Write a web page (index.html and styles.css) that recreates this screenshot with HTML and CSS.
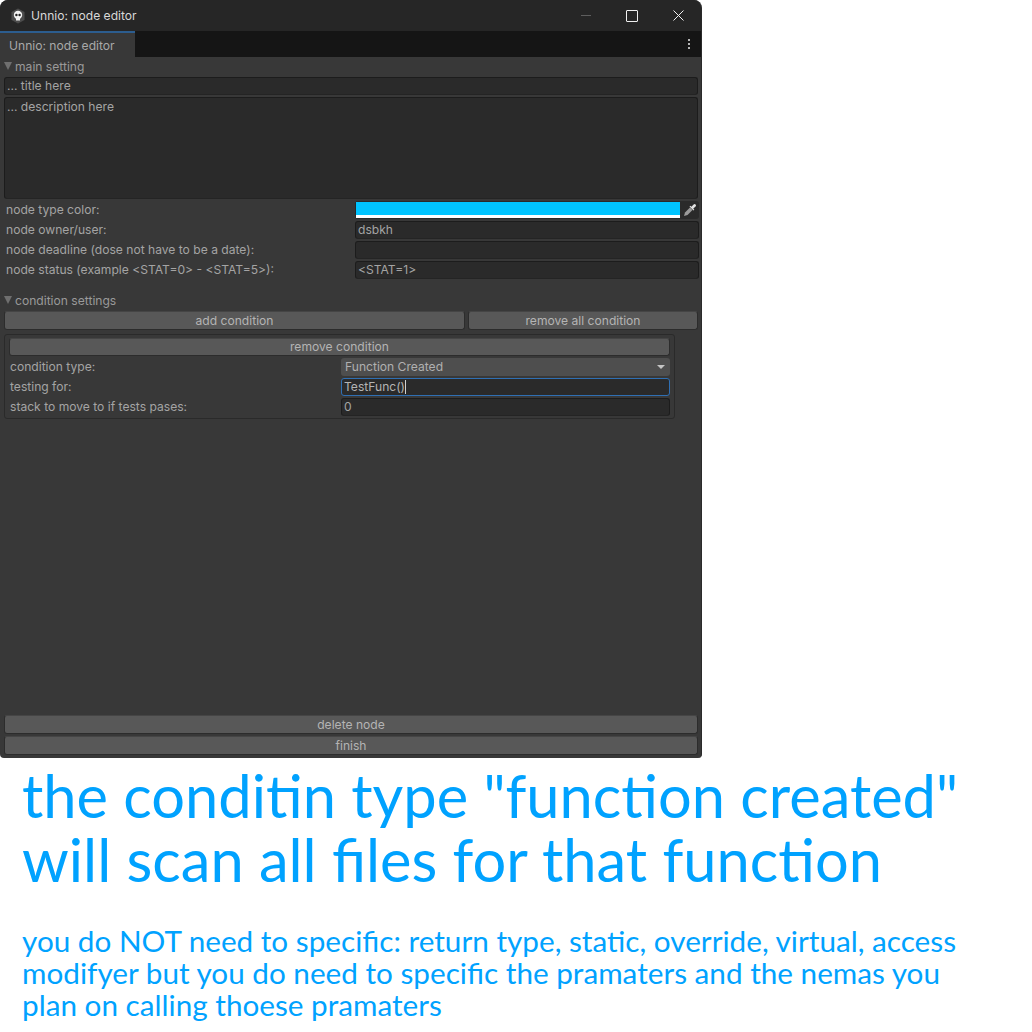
FILE: index.html
```html
<!DOCTYPE html>
<html>
	<head>
		<meta charset="utf-8">
		<title>Unnio: node editor</title>
		<link rel="stylesheet" href="styles.css">
	</head>
	<body>
		<div class="window">
			<div class="titlebar">
				<svg class="appicon" viewBox="0 0 16 16" width="16" height="16">
					<path d="M8 0.5 L14.5 4 V12 L8 15.5 L1.5 12 V4 Z" fill="#4c4c4c"/>
					<circle cx="8" cy="7" r="4.2" fill="#f2f2f2"/>
					<rect x="6" y="10" width="4" height="2.5" fill="#f2f2f2"/>
					<circle cx="6.4" cy="7" r="1.2" fill="#222"/>
					<circle cx="9.6" cy="7" r="1.2" fill="#222"/>
				</svg>
				<span class="titletext">Unnio: node editor</span>
				<div class="winbtns">
					<span class="winbtn"><i class="minimize"></i></span>
					<span class="winbtn"><i class="maximize"></i></span>
					<span class="winbtn">
						<svg viewBox="0 0 11 11" width="11" height="11"><path d="M0.5 0.5 L10.5 10.5 M10.5 0.5 L0.5 10.5" stroke="#f0f0f0" stroke-width="1" fill="none"/></svg>
					</span>
				</div>
			</div>
			<div class="tabbar">
				<div class="tab">Unnio: node editor</div>
				<div class="kebab"><i></i><i></i><i></i></div>
			</div>
			<div class="content">
				<div class="header"><i class="arrow"></i>main setting</div>
				<div class="input full">... title here</div>
				<div class="input full multiline">... description here</div>

				<div class="row first">
					<span class="label">node type color:</span>
					<div class="colorfield">
						<div class="swatch"></div>
						<svg class="picker" viewBox="0 0 14 14" width="14" height="14">
							<path d="M1 13 L2 9.5 L7 4.5 L9.5 7 L4.5 12 Z" fill="#9a9a9a"/>
							<path d="M6.5 3.5 L10.5 7.5 L11.3 6.7 L10.3 5.6 L12.6 3.4 Q13.5 2.4 12.6 1.4 Q11.6 0.5 10.6 1.4 L8.4 3.7 L7.3 2.7 Z" fill="#e2e2e2"/>
						</svg>
					</div>
				</div>
				<div class="row">
					<span class="label">node owner/user:</span>
					<div class="input">dsbkh</div>
				</div>
				<div class="row">
					<span class="label">node deadline (dose not have to be a date):</span>
					<div class="input"></div>
				</div>
				<div class="row">
					<span class="label">node status (example &lt;STAT=0&gt; - &lt;STAT=5&gt;):</span>
					<div class="input">&lt;STAT=1&gt;</div>
				</div>

				<div class="header second"><i class="arrow"></i>condition settings</div>
				<div class="btnrow">
					<div class="btn add">add condition</div>
					<div class="btn removeall">remove all condition</div>
				</div>

				<div class="condition">
					<div class="btn">remove condition</div>
					<div class="crow">
						<span class="clabel">condition type:</span>
						<div class="combo">Function Created<i class="comboarrow"></i></div>
					</div>
					<div class="crow">
						<span class="clabel">testing for:</span>
						<div class="input focused">TestFunc()<i class="caret"></i></div>
					</div>
					<div class="crow">
						<span class="clabel">stack to move to if tests pases:</span>
						<div class="input">0</div>
					</div>
				</div>

				<div class="bottom">
					<div class="btn">delete node</div>
					<div class="btn">finish</div>
				</div>
			</div>
		</div>
		<div class="notes">
			<p class="big">the conditin type "function created" will scan all files for that function</p>
			<p class="small">you do NOT need to specific: return type, static, override, virtual, access modifyer but you do need to specific the pramaters and the nemas you plan on calling thoese pramaters</p>
		</div>
	</body>
</html>
```

FILE: styles.css
```css
body {
	margin: 0;
	background-color: #fff;
	font-family: Inter, "Liberation Sans", sans-serif;
	font-size: 12.1px;
	color: #a9a9a9;
}

.window {
	width: 702px;
	height: 758px;
	box-sizing: border-box;
	background-color: #383838;
	border-radius: 8px 8px 4px 4px;
	border-right: 1px solid #2a2a2a;
	display: flex;
	flex-direction: column;
	overflow: hidden;
}

.titlebar {
	height: 31px;
	flex: none;
	background-color: #262626;
	display: flex;
	align-items: center;
	padding-left: 10px;
	color: #d8d8d8;
}

.appicon {
	margin-right: 5px;
}

.winbtns {
	margin-left: auto;
	display: flex;
}

.winbtn {
	width: 46px;
	height: 31px;
	display: flex;
	align-items: center;
	justify-content: center;
}

.minimize {
	width: 10px;
	height: 1px;
	background-color: #5e5e5e;
}

.maximize {
	width: 10px;
	height: 10px;
	border: 1px solid #f0f0f0;
	border-radius: 1px;
}

.tabbar {
	height: 26px;
	flex: none;
	background-color: #151515;
	display: flex;
	justify-content: space-between;
}

.tab {
	width: 135px;
	box-sizing: border-box;
	background-color: #383838;
	border-top: 2px solid #2c5d8f;
	padding: 5px 0 0 9px;
	color: #a9a9a9;
}

.kebab {
	width: 25px;
	display: flex;
	flex-direction: column;
	align-items: center;
	justify-content: center;
	gap: 2px;
}

.kebab i {
	width: 2px;
	height: 2px;
	background-color: #b5b5b5;
}

.content {
	flex: 1;
	display: flex;
	flex-direction: column;
	padding: 0 3px 3px 4px;
	min-height: 0;
}

.header {
	height: 18px;
	margin-bottom: 2px;
	flex: none;
	display: flex;
	align-items: center;
	color: #9a9a9a;
}

.header.second {
	margin-top: 12px;
}

.arrow {
	width: 0;
	height: 0;
	margin-right: 3px;
	border-left: 4px solid transparent;
	border-right: 4px solid transparent;
	border-top: 8px solid #6f6f6f;
}

.input {
	box-sizing: border-box;
	height: 18px;
	flex: 1;
	background-color: #2a2a2a;
	border: 1px solid #1c1c1c;
	border-bottom-color: #242424;
	border-radius: 3px;
	padding: 0 2px;
	line-height: 16px;
	color: #a4a4a4;
	white-space: nowrap;
}

.input.full {
	flex: none;
	width: 694px;
}

.input.multiline {
	height: 102px;
	margin-top: 2px;
	padding-top: 1px;
}

.row {
	display: flex;
	height: 18px;
	margin-top: 2px;
	margin-right: -1px;
	padding-left: 2px;
	align-items: center;
}

.label {
	width: 349px;
	flex: none;
	padding-bottom: 2px;
	color: #a4a4a4;
}

.colorfield {
	flex: 1;
	height: 18px;
	box-sizing: border-box;
	background-color: #2a2a2a;
	border-radius: 3px;
	padding: 1px 0 0 1px;
	display: flex;
}

.swatch {
	width: 324px;
	height: 16px;
	box-sizing: border-box;
	background-color: #00c4ff;
	border-bottom: 3px solid #fff;
}

.picker {
	margin: 1px 0 0 3px;
}

.btnrow {
	display: flex;
	gap: 3px;
}

.btn {
	box-sizing: border-box;
	height: 19px;
	background-color: #585858;
	border: 1px solid #2c2c2c;
	border-top-color: #454545;
	border-radius: 3px;
	text-align: center;
	line-height: 17px;
	color: #b4b4b4;
}

.btn.add {
	width: 461px;
	flex: none;
}

.btn.removeall {
	flex: 1;
}

.condition {
	width: 671px;
	height: 85px;
	box-sizing: border-box;
	margin-top: 4px;
	padding: 3px 4px;
	border: 1px solid #2a2a2a;
	border-radius: 3px;
	display: flex;
	flex-direction: column;
}

.condition .btn {
	height: 18px;
	line-height: 16px;
}

.crow {
	display: flex;
	align-items: center;
	height: 18px;
	margin-top: 2px;
}

.clabel {
	width: 331px;
	flex: none;
	padding-left: 1px;
	padding-bottom: 2px;
	color: #a4a4a4;
}

.combo {
	flex: 1;
	box-sizing: border-box;
	height: 18px;
	background-color: #4e4e4e;
	border-radius: 3px;
	padding: 0 4px;
	line-height: 18px;
	color: #b0b0b0;
	display: flex;
	align-items: center;
	justify-content: space-between;
}

.comboarrow {
	width: 0;
	height: 0;
	margin-right: 1px;
	border-left: 4px solid transparent;
	border-right: 4px solid transparent;
	border-top: 4px solid #c4c4c4;
}

.input.focused {
	border-color: #2f6fb3;
	color: #b4b4b4;
}

.caret {
	display: inline-block;
	width: 1px;
	height: 14px;
	background-color: #d0d0d0;
	vertical-align: -3px;
}

.bottom {
	margin-top: auto;
	display: flex;
	flex-direction: column;
	gap: 2px;
}

.notes {
	padding-left: 22px;
	width: 960px;
	font-family: Lato, sans-serif;
	color: #00a2ff;
}

.notes p {
	margin: 0;
}

.big {
	font-size: 59.6px;
	line-height: 64px;
	margin-top: 5px !important;
}

.small {
	font-size: 29.7px;
	line-height: 32px;
	margin-top: 34px !important;
}
```
